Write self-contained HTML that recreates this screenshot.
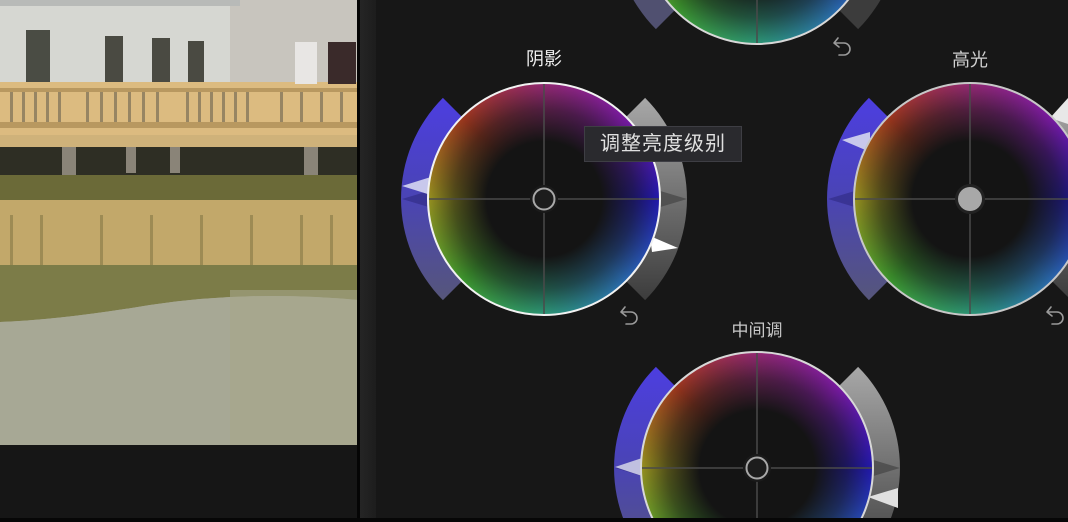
<!DOCTYPE html>
<html><head><meta charset="utf-8"><style>
html,body{margin:0;padding:0;width:1068px;height:522px;overflow:hidden;}
body{background:#171717;font-family:"Liberation Sans","Noto Sans CJK SC",sans-serif;}
#root{position:relative;width:1068px;height:522px;overflow:hidden;background:#171717;}
.abs{position:absolute;}
.wheel{position:absolute;width:230px;height:230px;border-radius:50%;border:2px solid #f2f2f2;
background:radial-gradient(circle closest-side, #141414 0, #141414 50%, rgba(20,20,20,0.55) 78%, rgba(20,20,20,0.05) 100%),
conic-gradient(from 0deg,#9a2a78,#7e1aa8 45deg,#2218b4 90deg,#2a6cb4 135deg,#2e9c7a 180deg,#3e9c2e 225deg,#9c9620 270deg,#a4381e 315deg,#9a2a78 360deg);}
.lbl{position:absolute;font-size:18px;transform:translateX(-50%);white-space:nowrap;}
</style></head><body><div id="root">
<svg class="abs" style="left:0;top:0" width="358" height="446">
<rect width="358" height="446" fill="#a9aa9a"/>
<rect width="358" height="85" fill="#d6d7d2"/>
<rect x="230" y="0" width="128" height="85" fill="#c8c5be"/>
<rect x="0" y="0" width="240" height="6" fill="#b8bab8"/>
<rect x="26" y="30" width="24" height="52" fill="#4a4c44"/><rect x="105" y="36" width="18" height="46" fill="#4a4a42"/><rect x="152" y="38" width="18" height="44" fill="#4a4a42"/><rect x="188" y="41" width="16" height="42" fill="#4a4a42"/>
<rect x="0" y="82" width="358" height="60" fill="#dcbb80"/>
<g fill="#b89860"><rect x="0" y="88" width="358" height="4"/><rect x="0" y="122" width="358" height="6"/></g>
<g fill="#6a6250" opacity=".6">
<rect x="10" y="92" width="3" height="30"/><rect x="22" y="92" width="3" height="30"/><rect x="34" y="92" width="3" height="30"/><rect x="46" y="92" width="3" height="30"/><rect x="58" y="92" width="3" height="30"/><rect x="86" y="92" width="3" height="30"/><rect x="100" y="92" width="3" height="30"/><rect x="114" y="92" width="3" height="30"/><rect x="128" y="92" width="3" height="30"/><rect x="142" y="92" width="3" height="30"/><rect x="156" y="92" width="3" height="30"/><rect x="186" y="92" width="3" height="30"/><rect x="198" y="92" width="3" height="30"/><rect x="210" y="92" width="3" height="30"/><rect x="222" y="92" width="3" height="30"/><rect x="234" y="92" width="3" height="30"/><rect x="246" y="92" width="3" height="30"/><rect x="280" y="92" width="3" height="30"/><rect x="300" y="92" width="3" height="30"/><rect x="320" y="92" width="3" height="30"/><rect x="340" y="92" width="3" height="30"/></g>
<rect x="0" y="135" width="358" height="12" fill="#cfb27a"/>
<rect x="0" y="147" width="358" height="28" fill="#2e2e24"/>
<g fill="#8a8478"><rect x="62" y="147" width="14" height="30"/><rect x="126" y="147" width="10" height="26"/><rect x="170" y="147" width="10" height="26"/><rect x="304" y="147" width="14" height="30"/></g>
<rect x="295" y="42" width="22" height="42" fill="#e8e6e4"/><rect x="328" y="42" width="28" height="42" fill="#3a2a2a"/>
<rect x="0" y="175" width="358" height="25" fill="#6b6a38"/>
<rect x="0" y="200" width="358" height="70" fill="#c2a86a"/>
<g fill="#7a7040" opacity=".5"><rect x="10" y="215" width="3" height="50"/><rect x="40" y="215" width="3" height="50"/><rect x="100" y="215" width="3" height="50"/><rect x="150" y="215" width="3" height="50"/><rect x="200" y="215" width="3" height="50"/><rect x="250" y="215" width="3" height="50"/><rect x="300" y="215" width="3" height="50"/><rect x="330" y="215" width="3" height="50"/></g>
<path d="M0 265 H358 V300 Q250 290 150 305 Q60 320 0 322Z" fill="#7c7c48"/>
<path d="M0 322 Q60 320 150 305 Q250 290 358 300 V446 H0Z" fill="#a7a895"/>
<rect x="230" y="290" width="128" height="156" fill="#a6a68a" opacity=".6"/>
</svg>
<div class="abs" style="left:0;top:445px;width:358px;height:73px;background:#161616"></div>
<div class="abs" style="left:357px;top:0;width:3px;height:522px;background:#050505"></div>
<div class="abs" style="left:360px;top:0;width:16px;height:518px;background:linear-gradient(90deg,#252525,#1d1d1d)"></div>

<svg class="abs" style="left:0;top:0" width="1068" height="522">
<defs>
<linearGradient id="bl" x1="0" y1="0" x2="0" y2="1"><stop offset="0" stop-color="#4c3ee0"/><stop offset=".5" stop-color="#4a44b4"/><stop offset="1" stop-color="#56567a"/></linearGradient>
<linearGradient id="gr" x1="0" y1="0" x2="0" y2="1"><stop offset="0" stop-color="#a8a8a8"/><stop offset=".5" stop-color="#707070"/><stop offset="1" stop-color="#3c3c3c"/></linearGradient>
</defs>
<path d="M442.9,97.9 A143 143 0 0 0 442.9,300.1 L473.3,269.7 A100 100 0 0 1 473.3,128.3Z" fill="url(#bl)"/>
<path d="M645.1,97.9 A143 143 0 0 1 645.1,300.1 L614.7,269.7 A100 100 0 0 0 614.7,128.3Z" fill="url(#gr)"/>
<path d="M868.9,97.9 A143 143 0 0 0 868.9,300.1 L899.3,269.7 A100 100 0 0 1 899.3,128.3Z" fill="url(#bl)"/>
<path d="M1071.1,97.9 A143 143 0 0 1 1071.1,300.1 L1040.7,269.7 A100 100 0 0 0 1040.7,128.3Z" fill="url(#gr)"/>
<path d="M655.9,366.9 A143 143 0 0 0 655.9,569.1 L686.3,538.7 A100 100 0 0 1 686.3,397.3Z" fill="url(#bl)"/>
<path d="M858.1,366.9 A143 143 0 0 1 858.1,569.1 L827.7,538.7 A100 100 0 0 0 827.7,397.3Z" fill="url(#gr)"/>
<path d="M655.9,-173.1 A143 143 0 0 0 655.9,29.1 L686.3,-1.3 A100 100 0 0 1 686.3,-142.7Z" fill="#505070"/>
<path d="M858.1,-173.1 A143 143 0 0 1 858.1,29.1 L827.7,-1.3 A100 100 0 0 0 827.7,-142.7Z" fill="#3c3c3c"/>
<g fill="#2e2a80" opacity=".6"><polygon points="402,199 432,190 432,208"/><polygon points="828,199 858,190 858,208"/><polygon points="615,468 645,459 645,477"/></g>
<g fill="#444" opacity=".7"><polygon points="687,199 657,190 657,208"/><polygon points="900,468 870,459 870,477"/></g>
<polygon points="402,186 434,176 434,196" fill="#c8c8ec"/>
<polygon points="650,236 678,248 652,252" fill="#ffffff"/>
<polygon points="842,140 870,132 870,152" fill="#c8c8ec"/>
<polygon points="1050,118 1068,98 1068,124" fill="#e8e8e8"/>
<polygon points="615,467 645,457 645,477" fill="#c0c0e0"/>
<polygon points="868,497 898,488 898,508" fill="#e0e0e0"/>
</svg>

<div class="wheel" style="left:427px;top:82px"></div>
<div class="wheel" style="left:853px;top:82px;border-color:#c8c8c8"></div>
<div class="abs" style="left:640px;top:351px;width:234px;height:167px;overflow:hidden"><div class="wheel" style="left:0;top:0;border-color:#d8d8d8"></div></div>
<div class="abs" style="left:640px;top:0;width:234px;height:45px;overflow:hidden"><div class="wheel" style="left:0;top:-189px;border-color:#d8d8d8"></div></div>

<svg class="abs" style="left:0;top:0" width="1068" height="522">
<g stroke="#4a4a4a" stroke-width="1.5">
<line x1="429" y1="199" x2="659" y2="199"/><line x1="544" y1="84" x2="544" y2="314"/>
<line x1="855" y1="199" x2="1068" y2="199"/><line x1="970" y1="84" x2="970" y2="314"/>
<line x1="642" y1="468" x2="872" y2="468"/><line x1="757" y1="353" x2="757" y2="518"/>
<line x1="757" y1="0" x2="757" y2="43"/>
</g>
<circle cx="544" cy="199" r="14" fill="#1a1a1a"/><circle cx="544" cy="199" r="10.5" fill="#1c1c1c" stroke="#a8a8a8" stroke-width="2"/>
<circle cx="970" cy="199" r="15" fill="#222"/><circle cx="970" cy="199" r="12" fill="#a8a8a8"/>
<circle cx="757" cy="468" r="14" fill="#1a1a1a"/><circle cx="757" cy="468" r="10.5" fill="#1c1c1c" stroke="#a8a8a8" stroke-width="2"/>
<g fill="none" stroke="#9a9a9a" stroke-width="1.6" stroke-linecap="round" stroke-linejoin="round">
<path d="M625,307 L621,312 L626,316 M621,312 H631 A6 6 0 0 1 631,324 H626"/>
<path d="M1051,307 L1047,312 L1052,316 M1047,312 H1057 A6 6 0 0 1 1057,324 H1052"/>
<path d="M838,38 L834,43 L839,47 M834,43 H844 A6 6 0 0 1 844,55 H839"/>
</g>
</svg>
<div class="abs" style="left:0;top:518px;width:1068px;height:4px;background:#070707"></div>

<div class="lbl" style="left:544px;top:45px;color:#f0f0f0">阴影</div>
<div class="lbl" style="left:970px;top:46px;color:#d0d0d0">高光</div>
<div class="lbl" style="left:757px;top:316px;color:#c8c8c8;font-size:17px">中间调</div>
<div class="abs" style="left:584px;top:126px;width:158px;height:36px;background:#2a2a2e;border:1px solid #3e3e44;box-sizing:border-box;color:#e0e0e0;font-size:20px;line-height:34px;text-align:center;letter-spacing:1px">调整亮度级别</div>
</div></body></html>
